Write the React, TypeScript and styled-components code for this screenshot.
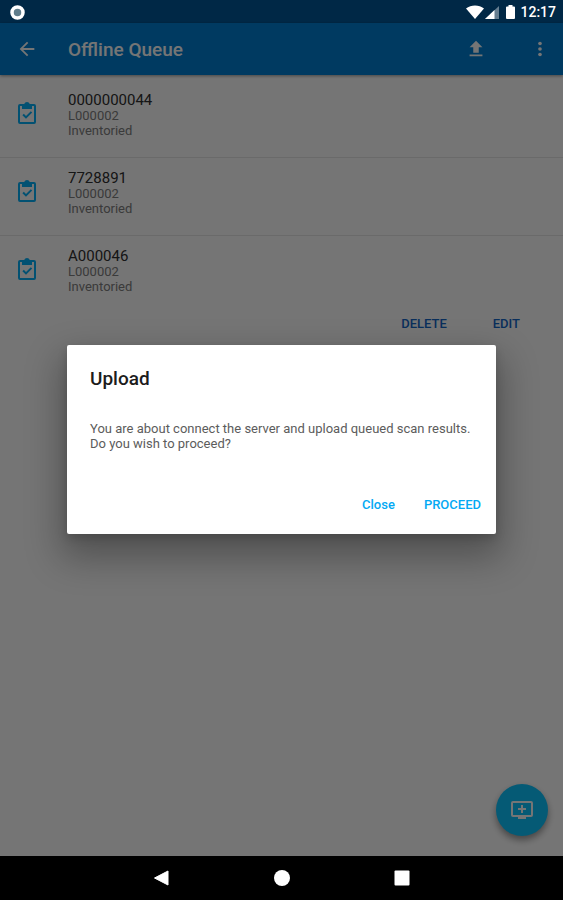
import React from "react";
import styled, { createGlobalStyle } from "styled-components";

const GlobalStyle = createGlobalStyle`
  *, *::before, *::after { box-sizing: border-box; }
  body { margin: 0; font-family: Roboto, sans-serif; background: #fff; }
  button { font: inherit; border: 0; padding: 0; background: none; cursor: pointer; }
  h1, h2, h3, p, ul { margin: 0; padding: 0; }
`;

const Device = styled.div`
  min-height: 100vh;
  display: flex;
  flex-direction: column;
`;

const Screen = styled.div`
  position: relative;
  flex: 1;
  display: flex;
  flex-direction: column;
`;

const StatusBar = styled.div`
  height: 23px;
  flex: none;
  background: #00589a;
`;

const StatusLayer = styled.div`
  position: absolute;
  inset: 0 0 auto 0;
  z-index: 3;
  height: 23px;
  display: flex;
  align-items: center;
  justify-content: space-between;
  padding: 1px 7px 0 9px;
  color: #fff;
`;

const StatusIcons = styled.div`
  display: flex;
  align-items: center;
`;

const Clock = styled.time`
  margin-left: 4px;
  font-size: 14px;
  line-height: 20px;
  font-weight: 500;
`;

const AppBar = styled.header`
  height: 52px;
  flex: none;
  display: flex;
  align-items: center;
  padding: 0 12px 0 16px;
  background: #007fd4;
  color: #fff;
  box-shadow: 0 1px 3px rgba(0, 0, 0, 0.4);
`;

const Title = styled.h1`
  flex: 1;
  padding: 2px 0 0 30px;
  font-size: 19px;
  line-height: 24px;
  font-weight: 500;
`;

const BarButton = styled.button<{ $gap?: number }>`
  display: flex;
  color: inherit;
  margin-left: ${(p) => p.$gap ?? 0}px;
`;

const List = styled.ul`
  list-style: none;
  padding-top: 5px;
`;

const Item = styled.li`
  display: flex;
  gap: 29px;
  height: 78px;
  padding: 12px 16px 0 15px;
  border-bottom: 1px solid #e8e8e8;

  &:last-child {
    border-bottom-color: transparent;
  }

  svg {
    margin-top: 9px;
  }
`;

const ItemTitle = styled.h3`
  font-size: 15px;
  line-height: 16px;
  font-weight: 400;
  color: #303030;
`;

const ItemLine = styled.p`
  font-size: 13px;
  line-height: 15px;
  color: #808080;
`;

const RowActions = styled.div`
  display: flex;
  justify-content: flex-end;
  gap: 46px;
  padding: 2px 43px 0;
`;

const TextButton = styled.button<{ $tone: string }>`
  font-size: 13px;
  line-height: 16px;
  font-weight: 500;
  color: ${(p) => p.$tone};
`;

const Fab = styled.button`
  position: absolute;
  right: 15px;
  bottom: 20px;
  width: 52px;
  height: 52px;
  border-radius: 50%;
  display: flex;
  align-items: center;
  justify-content: center;
  color: #fff;
  background: #0cc4ff;
  box-shadow: 0 4px 7px rgba(0, 0, 0, 0.4);
`;

const Backdrop = styled.div`
  position: absolute;
  inset: 0;
  z-index: 2;
  padding-top: 23px;
  display: flex;
  align-items: center;
  justify-content: center;
  background: rgba(0, 0, 0, 0.54);
`;

const Dialog = styled.section`
  width: 76.2%;
  padding: 22px 15px 21px 23px;
  border-radius: 2px;
  background: #fff;
  box-shadow: 0 18px 36px 6px rgba(0, 0, 0, 0.3), 0 4px 10px rgba(0, 0, 0, 0.15);
`;

const DialogTitle = styled.h2`
  font-size: 19px;
  line-height: 24px;
  font-weight: 500;
  color: #1c1c1c;
`;

const DialogText = styled.p`
  padding: 30px 0 46px;
  font-size: 13px;
  line-height: 15px;
  color: #5c5c5c;
`;

const DialogActions = styled.div`
  display: flex;
  justify-content: flex-end;
  gap: 29px;
`;

const NavBar = styled.nav`
  height: 44px;
  flex: none;
  display: flex;
  align-items: center;
  justify-content: center;
  gap: 100px;
  background: #000;
`;

const NavButton = styled.button`
  display: flex;
  color: #fff;
`;

const icon = (size: number) => ({
  width: size,
  height: size,
  viewBox: "0 0 24 24",
  fill: "currentColor",
  "aria-hidden": true,
});

const ClipboardIcon = () => (
  <svg {...icon(24)} color="#06b0f8">
    <path
      fillRule="evenodd"
      d="M19 3h-4.200a3 3 0 0 0-5.600 0H5a2 2 0 0 0-2 2v16a2 2 0 0 0 2 2h14a2 2 0 0 0 2-2V5a2 2 0 0 0-2-2zm0 18H5V5h2v3h10V5h2zM7.400 14.200l1.400-1.400 2.200 2.200 4.800-4.800 1.400 1.400-6.200 6.200z"
    />
  </svg>
);

const entries = [
  { code: "0000000044", location: "L000002", state: "Inventoried" },
  { code: "7728891", location: "L000002", state: "Inventoried" },
  { code: "A000046", location: "L000002", state: "Inventoried" },
];

export default function App() {
  return (
    <>
      <GlobalStyle />
      <Device>
        <Screen>
          <StatusBar />
          <StatusLayer>
            <svg width="17" height="17" viewBox="0 0 17 17" aria-hidden>
              <circle cx="8.500" cy="8.500" r="5.500" fill="#607d8b" stroke="#fff" strokeWidth="3.500" />
            </svg>
            <StatusIcons>
              <svg width="50" height="16" viewBox="0 0 50 16" fill="#fff" aria-hidden>
                <path d="M0 4.500C5 .500 13 .500 18 4.500L9 15z" />
                <path d="M33 2v13H19z" opacity=".4" />
                <path d="M28.500 6v9H19z" />
                <path d="M42.500 1h4v1.500h1.500q1 0 1 1V14q0 1-1 1h-7q-1 0-1-1V3.500q0-1 1-1h1.500z" />
              </svg>
              <Clock>12:17</Clock>
            </StatusIcons>
          </StatusLayer>
          <AppBar>
            <BarButton aria-label="Back">
              <svg {...icon(22)}>
                <path d="M20 11H7.830l5.590-5.590L12 4l-8 8 8 8 1.410-1.410L7.830 13H20z" />
              </svg>
            </BarButton>
            <Title>Offline Queue</Title>
            <BarButton aria-label="Upload">
              <svg {...icon(22)}>
                <path d="M9 16h6v-6h4l-7-7-7 7h4zm-4 2h14v2H5z" />
              </svg>
            </BarButton>
            <BarButton aria-label="More options" $gap={42}>
              <svg {...icon(22)}>
                <circle cx="12" cy="6" r="2" />
                <circle cx="12" cy="12" r="2" />
                <circle cx="12" cy="18" r="2" />
              </svg>
            </BarButton>
          </AppBar>
          <main>
            <List>
              {entries.map((e) => (
                <Item key={e.code}>
                  <ClipboardIcon />
                  <div>
                    <ItemTitle>{e.code}</ItemTitle>
                    <ItemLine>{e.location}</ItemLine>
                    <ItemLine>{e.state}</ItemLine>
                  </div>
                </Item>
              ))}
            </List>
            <RowActions>
              <TextButton $tone="#1467c8">DELETE</TextButton>
              <TextButton $tone="#1467c8">EDIT</TextButton>
            </RowActions>
          </main>
          <Fab aria-label="Add to queue">
            <svg {...icon(24)}>
              <path
                fillRule="evenodd"
                d="M21 3H3a2 2 0 0 0-2 2v12a2 2 0 0 0 2 2h5v2h8v-2h5a2 2 0 0 0 2-2V5a2 2 0 0 0-2-2zm0 14H3V5h18zM8 12v-2h3V7h2v3h3v2h-3v3h-2v-3z"
              />
            </svg>
          </Fab>
          <Backdrop>
            <Dialog role="dialog" aria-modal="true" aria-labelledby="dialog-title">
              <DialogTitle id="dialog-title">Upload</DialogTitle>
              <DialogText>
                You are about connect the server and upload queued scan results.
                <br />
                Do you wish to proceed?
              </DialogText>
              <DialogActions>
                <TextButton $tone="#03a9f4">Close</TextButton>
                <TextButton $tone="#03a9f4">PROCEED</TextButton>
              </DialogActions>
            </Dialog>
          </Backdrop>
        </Screen>
        <NavBar>
          <NavButton aria-label="Back">
            <svg width="20" height="20" viewBox="0 0 20 20" fill="currentColor" aria-hidden>
              <path d="M16 3v14L2.500 10z" stroke="currentColor" strokeLinejoin="round" />
            </svg>
          </NavButton>
          <NavButton aria-label="Home">
            <svg width="20" height="20" viewBox="0 0 20 20" fill="currentColor" aria-hidden>
              <circle cx="10" cy="10" r="8" />
            </svg>
          </NavButton>
          <NavButton aria-label="Recent apps">
            <svg width="20" height="20" viewBox="0 0 20 20" fill="currentColor" aria-hidden>
              <rect x="2.500" y="2.500" width="15" height="15" rx="1" />
            </svg>
          </NavButton>
        </NavBar>
      </Device>
    </>
  );
}
